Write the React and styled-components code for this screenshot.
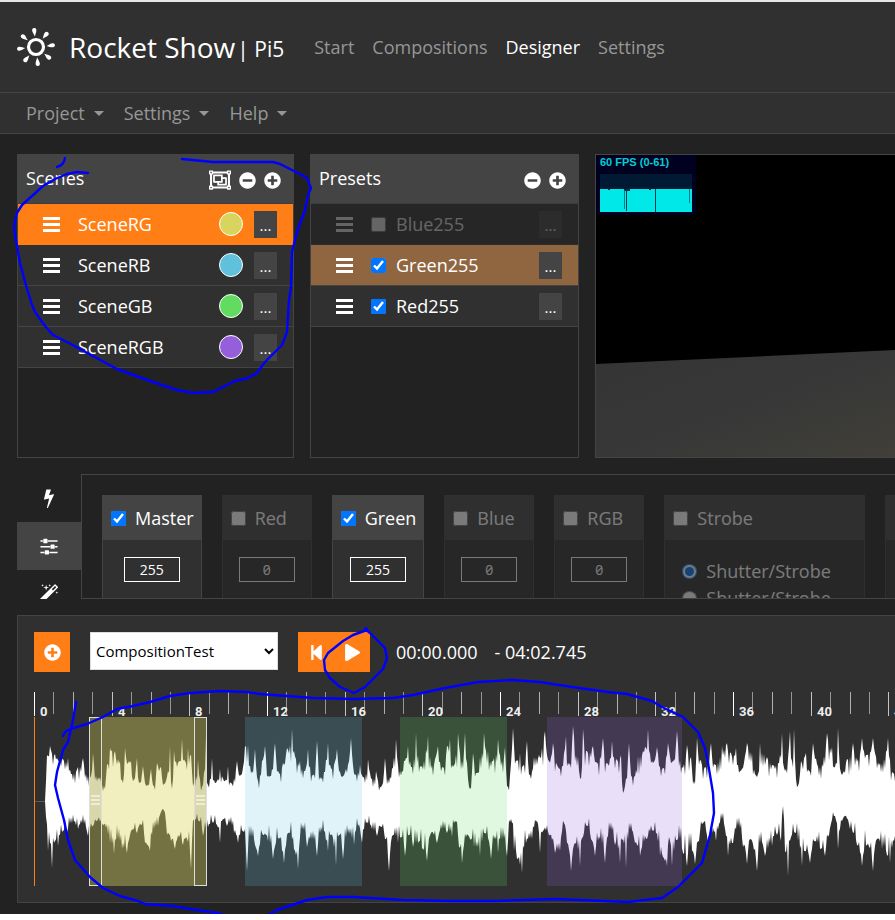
import React from "react";
import styled, { createGlobalStyle, css } from "styled-components";
import {
  FaMinusCircle,
  FaPlay,
  FaPlusCircle,
  FaRegObjectGroup,
  FaStepBackward,
} from "react-icons/fa";

const color = {
  page: "#222222",
  panel: "#303030",
  line: "#444444",
  muted: "#979797",
  accent: "#ff7f16",
  accentSoft: "#906641",
  pen: "#0000ff",
};

const GlobalStyle = createGlobalStyle`
  *, *::before, *::after { box-sizing: border-box; }
  body {
    margin: 0;
    background: #ffffff;
    color: #ffffff;
    font-family: "Open Sans", "Noto Sans", sans-serif;
    font-size: 18px;
    line-height: 24px;
  }
  button, input, select { font: inherit; color: inherit; margin: 0; }
`;

const Page = styled.div`
  position: relative;
  border-top: 2px solid #e4e8ea;
  border-bottom: 6px solid #ffffff;
  background: ${color.page};
  overflow: hidden;
`;

const Header = styled.header`
  display: flex;
  align-items: center;
  height: 91px;
  padding-left: 17px;
  background: ${color.panel};
  border-bottom: 1px solid ${color.line};
  white-space: nowrap;
`;

const Brand = styled.a`
  display: flex;
  align-items: center;
  margin-right: 30px;
  color: #ffffff;
  text-decoration: none;
`;

const BrandName = styled.span`
  margin-left: 14px;
  font-size: 28px;
  line-height: 38px;
`;

const BrandDevice = styled.span`
  margin-left: 2px;
  padding-top: 4px;
  font-size: 21px;
  line-height: 28px;
`;

const Nav = styled.nav`
  display: flex;
  gap: 18px;
`;

const NavLink = styled.a`
  color: ${(p) => (p.$active ? "#ffffff" : color.muted)};
  text-decoration: none;
`;

const MenuBar = styled.nav`
  display: flex;
  align-items: center;
  gap: 20px;
  height: 41px;
  padding-left: 26px;
  background: ${color.panel};
  border-bottom: 1px solid ${color.line};
`;

const MenuButton = styled.button`
  display: flex;
  align-items: center;
  gap: 9px;
  padding: 0;
  border: 0;
  background: none;
  color: ${color.muted};

  &::after {
    content: "";
    border: 5px solid transparent;
    border-top-color: currentColor;
    border-bottom: 0;
  }
`;

const Workspace = styled.main`
  display: flex;
  flex-direction: column;
  gap: 16px;
  padding: 20px 0 11px 17px;
`;

const TopRow = styled.div`
  display: grid;
  grid-template-columns: 277fr 269fr 300fr;
  gap: 16px;
  height: 304px;
`;

const Panel = styled.section`
  min-width: 0;
  border: 1px solid ${color.line};
`;

const PanelHeader = styled.div`
  display: flex;
  align-items: center;
  justify-content: space-between;
  height: 49px;
  padding: 2px 12px 0 8px;
  background: ${color.line};
  border-bottom: 1px solid #3c3c3c;
`;

const PanelTitle = styled.h2`
  margin: 0 0 5px;
  font-size: 18px;
  font-weight: 400;
  line-height: 24px;
`;

const IconGroup = styled.div`
  display: flex;
  align-items: center;
  gap: 8px;
`;

const IconButton = styled.button`
  display: flex;
  padding: 0;
  border: 0;
  background: none;
  font-size: ${(p) => p.$size || 17}px;
`;

const List = styled.ul`
  margin: 0;
  padding: 0;
  list-style: none;
`;

const rowTone = {
  accent: css`
    background: ${color.accent};
    border-color: ${color.accent};
  `,
  soft: css`
    background: ${color.accentSoft};
  `,
};

const Row = styled.li`
  display: flex;
  align-items: center;
  height: 41px;
  padding: 0 16px 0 25px;
  background: ${color.panel};
  border-bottom: 1px solid ${color.line};
  opacity: ${(p) => (p.$dim ? 0.3 : 1)};
  ${(p) => rowTone[p.$tone]}
`;

const Grip = styled.span`
  display: flex;
  flex-direction: column;
  gap: 3px;
  width: 17px;
  margin-right: 18px;

  &::before, &::after, & > i {
    content: "";
    height: 3px;
    background: #ffffff;
  }
`;

const RowLabel = styled.label`
  display: flex;
  align-items: center;
  flex: 1;
  gap: 10px;
`;

const Tick = styled.input`
  width: 15px;
  height: 15px;
  flex: none;
`;

const Swatch = styled.span`
  width: 24px;
  height: 24px;
  margin-right: 11px;
  border: 1px solid #ffffff;
  border-radius: 50%;
  background: ${(p) => p.$fill};
`;

const MoreButton = styled.button`
  width: 23px;
  height: 27px;
  padding: 2px 0 0;
  border: 0;
  background: ${color.line};
  font-size: 15px;
  line-height: 24px;
`;

const Preview = styled.section`
  position: relative;
  min-width: 0;
  border: 1px solid ${color.line};
  border-right: 0;
  background: #000000;
`;

const Stage = styled.svg`
  display: block;
  width: 100%;
  height: 100%;
`;

const Stats = styled.div`
  position: absolute;
  top: 0;
  left: 0;
  width: 100px;
  padding: 0 4px 3px;
  background: #000020;
  color: #00cdd6;
  font: 700 11px/15px "Liberation Sans", Arial, sans-serif;
  white-space: nowrap;

  svg { display: block; margin-top: 4px; }
`;

const ChannelRow = styled.section`
  display: flex;
  height: 125px;
  overflow: hidden;
`;

const Tabs = styled.div`
  width: 64px;
  flex: none;
`;

const Tab = styled.button`
  display: flex;
  align-items: center;
  justify-content: center;
  width: 100%;
  height: 48px;
  padding: 0;
  border: 0;
  background: ${(p) => (p.$active ? color.line : "transparent")};
`;

const Channels = styled.div`
  display: flex;
  flex: 1;
  gap: 20px;
  min-width: 0;
  padding: 20px 0 0 20px;
  border: 1px solid ${color.line};
  border-right: 0;
  overflow: hidden;
`;

const Channel = styled.div`
  flex: none;
  min-width: ${(p) => (p.$wide ? 201 : 90)}px;
  min-height: 160px;
  border: 1px solid ${color.line};
  background: ${color.panel};
  opacity: ${(p) => (p.$dim ? 0.4 : 1)};
`;

const ChannelHeader = styled.label`
  display: flex;
  align-items: center;
  gap: 9px;
  height: 44px;
  padding: 0 7px 0 8px;
  background: ${color.line};
`;

const ChannelBody = styled.div`
  display: flex;
  flex-direction: column;
  align-items: ${(p) => (p.$start ? "flex-start" : "center")};
  gap: 3px;
  padding: ${(p) => (p.$start ? "19px 17px" : "17px 0")};
`;

const ValueInput = styled.input`
  width: 56px;
  height: 25px;
  padding: 0;
  border: 1px solid #ffffff;
  background: transparent;
  font-size: 14px;
  font-variant-numeric: slashed-zero;
  text-align: center;
`;

const RadioLabel = styled.label`
  display: flex;
  align-items: center;
  gap: 9px;
`;

const Timeline = styled.section`
  border: 1px solid ${color.line};
  border-right: 0;
  background: ${color.panel};
  padding: 16px 0 16px 16px;
`;

const Transport = styled.div`
  display: flex;
  align-items: flex-start;
  gap: 20px;
  height: 60px;
`;

const AccentButton = styled.button`
  display: flex;
  align-items: center;
  justify-content: center;
  width: 36px;
  height: 40px;
  padding: 0;
  border: 0;
  background: ${color.accent};
  font-size: 17px;
`;

const ButtonPair = styled.div`
  display: flex;
`;

const Composition = styled.select`
  width: 188px;
  height: 38px;
  padding: 0 1px;
  border: 1px solid #dddddd;
  border-radius: 0;
  background: #ffffff;
  color: #000000;
  font-size: 15px;
`;

const Clock = styled.div`
  display: flex;
  gap: 17px;
  padding: 8px 0 0 6px;
`;

const Track = styled.svg`
  display: block;
  width: 100%;
  height: 194px;
`;

const TrackLabel = styled.text`
  fill: #eeeeee;
  font: 700 13px Roboto, "Open Sans", sans-serif;
`;

const PenMarks = styled.svg`
  position: absolute;
  top: -2px;
  left: 0;
  width: 895px;
  height: 920px;
  pointer-events: none;
  fill: none;
  stroke: ${color.pen};
  stroke-width: 2.4;
  stroke-linecap: round;
  stroke-linejoin: round;
`;

function Glyph({ d }) {
  return (
    <svg width="20" height="20" viewBox="0 0 1792 1792" fill="currentColor" aria-hidden="true">
      <path d={d} />
    </svg>
  );
}

const BOLT =
  "M1333 566q18 20 7 44l-540 1157q-13 25-42 25-4 0-14-2-17-5-25.5-19t-4.5-30l197-808-406 101q-4 1-12 1-18 0-31-11-18-15-13-39l201-825q4-14 16-23t28-9h328q19 0 32 12.5t13 29.5q0 8-5 18l-171 463 396-98q8-2 12-2 19 0 34 15z";
const SLIDERS =
  "M480 1408v128h-352v-128h352zm352-128q26 0 45 19t19 45v256q0 26-19 45t-45 19h-256q-26 0-45-19t-19-45v-256q0-26 19-45t45-19h256zm160-384v128h-864v-128h864zm-640-512v128h-224v-128h224zm1312 1024v128h-736v-128h736zm-960-1152q26 0 45 19t19 45v256q0 26-19 45t-45 19h-256q-26 0-45-19t-19-45v-256q0-26 19-45t45-19h256zm640 512q26 0 45 19t19 45v256q0 26-19 45t-45 19h-256q-26 0-45-19t-19-45v-256q0-26 19-45t45-19h256zm320 128v128h-224v-128h224zm0-512v128h-864v-128h864z";
const WAND =
  "M1254 581l293-293-107-107-293 293zm447-293q0 27-18 45l-1286 1286q-18 18-45 18t-45-18l-198-198q-18-18-18-45t18-45l1286-1286q18-18 45-18t45 18l198 198q18 18 18 45zm-1351-190l98 30-98 30-30 98-30-98-98-30 98-30 30-98zm350 162l196 60-196 60-60 196-60-196-196-60 196-60 60-196zm930 478l98 30-98 30-30 98-30-98-98-30 98-30 30-98zm-640-640l98 30-98 30-30 98-30-98-98-30 98-30 30-98z";

function SunLogo() {
  return (
    <svg width="38" height="40" viewBox="-19 -20 38 40" aria-hidden="true">
      <circle r="7.5" fill="none" stroke="#fff" strokeWidth="3.2" />
      {[0, 1, 2, 3, 4, 5, 6, 7].map((i) => (
        <path
          key={i}
          d="M0 -10.6C-.8 -13 -2.1 -14.8 -2.1 -16.8C-2.1 -18.3 -1.2 -19 0 -19S2.1 -18.3 2.1 -16.8C2.1 -14.8 .8 -13 0 -10.6Z"
          fill="#fff"
          transform={`rotate(${i * 45 - 6})`}
        />
      ))}
    </svg>
  );
}

/* Amplitude control points as x, height pairs, measured from the centre line. */
const UPPER = [
  45, 0, 46, 20, 47, 46, 50, 55, 55, 47, 63, 42, 68, 43, 72, 27, 78, 34, 83, 43, 88, 25, 91, 25, 93, 48, 96, 25, 100, 24, 104, 15,
  107, 36, 110, 53, 115, 50, 118, 42, 120, 40, 123, 18, 125, 53, 129, 40, 131, 40, 133, 20, 137, 43, 139, 18, 143, 35, 147, 15,
  151, 32, 154, 15, 157, 38, 161, 34, 164, 17, 168, 30, 170, 55, 172, 12, 174, 50, 179, 40, 182, 62, 185, 40, 188, 53, 191, 46,
  194, 18, 198, 42, 202, 14, 206, 65, 208, 16, 212, 43, 215, 18, 220, 32, 225, 20, 228, 35, 231, 18, 237, 40, 241, 26, 245, 55,
  248, 56, 252, 30, 255, 52, 258, 20, 262, 40, 265, 55, 269, 24, 275, 58, 279, 28, 283, 38, 287, 53, 292, 72, 296, 42, 300, 40,
  305, 30, 308, 52, 313, 26, 317, 60, 321, 22, 328, 58, 332, 32, 337, 52, 342, 24, 346, 32, 351, 63, 355, 26, 360, 36, 364, 24,
  368, 42, 372, 22, 376, 30, 381, 14, 385, 43, 388, 22, 396, 62, 400, 30, 404, 40, 408, 55, 412, 34, 416, 68, 421, 34, 428, 65,
  432, 36, 438, 55, 443, 34, 447, 55, 450, 62, 453, 34, 458, 68, 462, 40, 465, 68, 467, 38, 470, 12, 473, 48, 477, 28, 480, 44,
  484, 68, 488, 50, 492, 40, 498, 62, 502, 40, 505, 54, 508, 14, 513, 73, 517, 40, 520, 48, 523, 35, 527, 60, 530, 26, 534, 44,
  539, 46, 545, 70, 549, 40, 553, 58, 560, 32, 566, 65, 569, 36, 573, 75, 578, 44, 581, 22, 583, 72, 587, 50, 593, 55, 597, 38,
  603, 63, 607, 38, 612, 60, 616, 42, 621, 46, 623, 8, 629, 58, 632, 24, 638, 45, 643, 50, 648, 72, 653, 38, 657, 54, 662, 32,
  668, 58, 673, 40, 677, 70, 682, 34, 687, 56, 691, 44, 694, 20, 697, 63, 701, 40, 705, 34, 711, 58, 715, 36, 722, 55, 727, 58,
  731, 48, 736, 53, 740, 30, 747, 58, 752, 48, 757, 24, 760, 58, 767, 44, 773, 36, 778, 38, 782, 68, 785, 30, 790, 70, 792, 40,
  794, 72, 797, 14, 801, 40, 806, 48, 809, 30, 813, 58, 820, 34, 827, 68, 832, 54, 835, 34, 838, 73, 841, 28, 847, 42, 853, 58,
  858, 42, 862, 63, 867, 46, 873, 63, 880, 38, 888, 63, 893, 28, 900, 60,
];
const LOWER = [
  45, 0, 46, 16, 48, 50, 50, 42, 52, 67, 55, 40, 58, 45, 63, 30, 67, 32, 72, 22, 78, 28, 82, 22, 88, 35, 93, 25, 97, 20, 103, 24,
  110, 42, 114, 53, 118, 38, 122, 48, 127, 52, 133, 28, 137, 32, 141, 24, 145, 42, 150, 50, 154, 28, 158, 25, 163, 8, 167, 34,
  171, 40, 175, 48, 179, 36, 183, 44, 187, 38, 191, 68, 194, 20, 199, 20, 203, 35, 208, 26, 213, 22, 217, 24, 220, 42, 223, 18,
  227, 25, 230, 22, 234, 32, 238, 42, 243, 30, 247, 70, 250, 36, 258, 55, 263, 34, 268, 40, 273, 58, 278, 38, 284, 62, 289, 32,
  294, 48, 298, 68, 302, 28, 307, 46, 312, 38, 317, 55, 322, 30, 328, 50, 331, 34, 336, 65, 339, 34, 343, 58, 348, 32, 354, 44,
  358, 25, 362, 42, 366, 22, 372, 28, 377, 35, 381, 26, 385, 38, 389, 70, 393, 34, 398, 42, 401, 36, 405, 55, 409, 34, 413, 46,
  418, 42, 422, 48, 427, 60, 431, 32, 437, 42, 442, 28, 447, 32, 452, 36, 455, 20, 459, 46, 462, 62, 466, 36, 470, 38, 474, 46,
  480, 55, 485, 32, 491, 58, 494, 38, 498, 52, 502, 38, 507, 55, 511, 18, 514, 50, 517, 58, 522, 72, 526, 42, 532, 38, 537, 20,
  540, 52, 543, 30, 549, 34, 555, 52, 560, 50, 564, 22, 567, 42, 571, 70, 575, 42, 580, 65, 583, 36, 587, 25, 591, 38, 595, 55,
  600, 38, 605, 62, 610, 28, 615, 44, 620, 62, 623, 38, 626, 67, 630, 28, 635, 42, 640, 55, 647, 38, 653, 30, 660, 55, 667, 65,
  669, 36, 672, 65, 678, 38, 683, 52, 687, 65, 690, 46, 695, 63, 699, 40, 703, 22, 708, 44, 712, 32, 716, 40, 722, 18, 728, 55,
  733, 42, 738, 25, 743, 46, 747, 63, 750, 38, 757, 70, 760, 42, 765, 55, 772, 45, 777, 34, 781, 40, 783, 5, 785, 50, 788, 75,
  791, 36, 795, 32, 802, 65, 806, 50, 810, 62, 815, 40, 820, 48, 825, 55, 829, 34, 835, 15, 838, 48, 842, 20, 845, 15, 850, 28,
  853, 32, 857, 44, 862, 65, 867, 44, 873, 70, 877, 38, 882, 48, 890, 62, 896, 40, 900, 60,
];

const ORIGIN = 34;
const CENTER = 109;
const SECOND = 233 / 12;

function edge(points, sign) {
  const out = [];
  let seed = sign > 0 ? 7 : 23;
  let k = 0;
  for (let x = 45; x < 900; x += 1) {
    while (k < points.length - 4 && points[k + 2] <= x) k += 2;
    const [x0, h0, x1, h1] = points.slice(k, k + 4);
    const t = Math.min(1, (x - x0) / (x1 - x0));
    seed = (seed * 16807) % 2147483647;
    const rand = seed / 2147483647;
    const low = Math.min(h0, h1);
    const ramp = low + (Math.max(h0, h1) - low) * Math.pow(h1 > h0 ? t : 1 - t, 1.7);
    const cut = x === x0 ? 0 : rand * (x % 2 ? 0.42 : 0.1);
    out.push(`${x - ORIGIN} ${(CENTER + sign * ramp * (1 - cut)).toFixed(1)}`);
  }
  return out;
}

const WAVE = `M${edge(UPPER, -1).join("L")}L${edge(LOWER, 1).reverse().join("L")}Z`;

const REGIONS = [
  { x: 55, w: 118, fill: "#ddd860", opacity: 0.4 },
  { x: 211, w: 117, fill: "#5fc1dc", opacity: 0.2 },
  { x: 366, w: 107, fill: "#61dc61", opacity: 0.2 },
  { x: 513, w: 135, fill: "#905fdc", opacity: 0.2 },
];

function Handle({ x }) {
  return (
    <g transform={`translate(${x} 25)`}>
      <rect x=".5" y=".5" width="12" height="168" fill="rgba(0,0,0,.1)" stroke="#dedede" />
      <path d="M2 79H11M2 83H11M2 87H11" stroke="#f4f3dc" strokeWidth="2" opacity=".85" />
    </g>
  );
}

function TimelineTrack() {
  const ticks = Array.from({ length: 45 }, (_, i) => i);
  return (
    <Track role="img" aria-label="Waveform">
      {ticks.map((i) => (
        <rect
          key={i}
          x={Math.round(i * SECOND)}
          width="1"
          height={i % 4 ? 22 : 24}
          fill={i % 12 === 0 ? "#ffffff" : i % 4 === 0 ? "#c4c4c4" : i % 2 ? "#969696" : "#b0b0b0"}
        />
      ))}
      {ticks.filter((i) => i % 4 === 0).map((i) => (
        <TrackLabel key={i} x={Math.round(i * SECOND) + 6} y="24">{i}</TrackLabel>
      ))}
      <path d={`M0 ${CENTER + 0.5}H12`} stroke="#5a5a5a" />
      <path d={WAVE} fill="#ffffff" />
      {REGIONS.map((r) => (
        <rect key={r.x} x={r.x} y="25" width={r.w} height="169" fill={r.fill} fillOpacity={r.opacity} />
      ))}
      <Handle x={55} />
      <Handle x={160} />
      <rect y="25" width="1" height="169" fill={color.accent} />
    </Track>
  );
}

const SCENES = [
  { name: "SceneRG", fill: "#d9d45d", tone: "accent" },
  { name: "SceneRB", fill: "#5fc1dc" },
  { name: "SceneGB", fill: "#61dc61" },
  { name: "SceneRGB", fill: "#955fdc" },
];

const PRESETS = [
  { name: "Blue255", on: false },
  { name: "Green255", on: true, tone: "soft" },
  { name: "Red255", on: true },
];

const CHANNELS = [
  { name: "Master", value: 255, on: true },
  { name: "Red", value: 0 },
  { name: "Green", value: 255, on: true },
  { name: "Blue", value: 0 },
  { name: "RGB", value: 0 },
];

export default function App() {
  return (
    <>
      <GlobalStyle />
      <Page>
        <Header>
          <Brand href="#">
            <SunLogo />
            <BrandName>Rocket Show</BrandName>
            <BrandDevice>| Pi5</BrandDevice>
          </Brand>
          <Nav>
            <NavLink href="#start">Start</NavLink>
            <NavLink href="#compositions">Compositions</NavLink>
            <NavLink href="#designer" $active>Designer</NavLink>
            <NavLink href="#settings">Settings</NavLink>
          </Nav>
        </Header>
        <MenuBar>
          <MenuButton>Project</MenuButton>
          <MenuButton>Settings</MenuButton>
          <MenuButton>Help</MenuButton>
        </MenuBar>

        <Workspace>
          <TopRow>
            <Panel>
              <PanelHeader>
                <PanelTitle>Scenes</PanelTitle>
                <IconGroup>
                  <IconButton $size={22} aria-label="Group scenes"><FaRegObjectGroup /></IconButton>
                  <IconButton aria-label="Remove scene"><FaMinusCircle /></IconButton>
                  <IconButton aria-label="Add scene"><FaPlusCircle /></IconButton>
                </IconGroup>
              </PanelHeader>
              <List>
                {SCENES.map((s) => (
                  <Row key={s.name} $tone={s.tone}>
                    <Grip><i /></Grip>
                    <RowLabel as="span">{s.name}</RowLabel>
                    <Swatch $fill={s.fill} />
                    <MoreButton aria-label={`${s.name} options`}>...</MoreButton>
                  </Row>
                ))}
              </List>
            </Panel>

            <Panel>
              <PanelHeader>
                <PanelTitle>Presets</PanelTitle>
                <IconGroup>
                  <IconButton aria-label="Remove preset"><FaMinusCircle /></IconButton>
                  <IconButton aria-label="Add preset"><FaPlusCircle /></IconButton>
                </IconGroup>
              </PanelHeader>
              <List>
                {PRESETS.map((p) => (
                  <Row key={p.name} $tone={p.tone} $dim={!p.on}>
                    <Grip><i /></Grip>
                    <RowLabel>
                      <Tick type="checkbox" defaultChecked={p.on} />
                      {p.name}
                    </RowLabel>
                    <MoreButton aria-label={`${p.name} options`}>...</MoreButton>
                  </Row>
                ))}
              </List>
            </Panel>

            <Preview>
              <Stage viewBox="0 0 299 302" preserveAspectRatio="none" aria-hidden="true">
                <defs>
                  <linearGradient id="floor" x1="0" y1="0" x2="1" y2="1">
                    <stop offset="0" stopColor="#343434" />
                    <stop offset=".55" stopColor="#383838" />
                    <stop offset="1" stopColor="#403f38" />
                  </linearGradient>
                </defs>
                <path d="M0 209L299 195V302H0Z" fill="url(#floor)" />
              </Stage>
              <Stats>
                60 FPS (0-61)
                <svg width="92" height="38" aria-hidden="true">
                  <path d="M0 0H92V38H0Z" fill="#001a33" />
                  <path d="M0 15H92V38H0Z" fill="#00e8e8" />
                  <path d="M24 15H30V17H24ZM8 15H10V16H8ZM49 15H51V16H49Z" fill="#002a40" />
                  <path d="M26.5 16V37M55.5 15V38" stroke="#003d4d" />
                  <path d="M24.5 16V35M89.5 15V29" stroke="#007a88" />
                </svg>
              </Stats>
            </Preview>
          </TopRow>

          <ChannelRow>
            <Tabs>
              <Tab aria-label="Capabilities"><Glyph d={BOLT} /></Tab>
              <Tab aria-label="Channels" $active><Glyph d={SLIDERS} /></Tab>
              <Tab aria-label="Effects"><Glyph d={WAND} /></Tab>
            </Tabs>
            <Channels>
              {CHANNELS.map((c) => (
                <Channel key={c.name} $dim={!c.on}>
                  <ChannelHeader>
                    <Tick type="checkbox" defaultChecked={c.on} />
                    {c.name}
                  </ChannelHeader>
                  <ChannelBody>
                    <ValueInput aria-label={`${c.name} value`} defaultValue={c.value} />
                  </ChannelBody>
                </Channel>
              ))}
              <Channel $dim $wide>
                <ChannelHeader>
                  <Tick type="checkbox" />
                  Strobe
                </ChannelHeader>
                <ChannelBody $start>
                  <RadioLabel>
                    <Tick type="radio" name="strobe" defaultChecked />
                    Shutter/Strobe
                  </RadioLabel>
                  <RadioLabel>
                    <Tick type="radio" name="strobe" />
                    Shutter/Strobe
                  </RadioLabel>
                </ChannelBody>
              </Channel>
              <Channel $dim>
                <ChannelHeader as="div" />
              </Channel>
            </Channels>
          </ChannelRow>

          <Timeline>
            <Transport>
              <AccentButton aria-label="Add region"><FaPlusCircle /></AccentButton>
              <Composition aria-label="Composition" defaultValue="CompositionTest">
                <option>CompositionTest</option>
              </Composition>
              <ButtonPair>
                <AccentButton aria-label="Back to start"><FaStepBackward /></AccentButton>
                <AccentButton aria-label="Play"><FaPlay /></AccentButton>
              </ButtonPair>
              <Clock>
                <span>00:00.000</span>
                <span>- 04:02.745</span>
              </Clock>
            </Transport>
            <TimelineTrack />
          </Timeline>
        </Workspace>

        <PenMarks viewBox="0 0 895 920" aria-hidden="true">
          <path d="M65 158Q64 165 57 167" />
          <path d="M88 173L77 172L67 174L55 179L43 186L32 196L22 205L17 213L14 225L15 235L18 252L20 263L25 282L32 305L35 312L45 326L53 335L67 342L117 369L150 381L177 390L193 393L213 392L235 381L248 378L257 373L265 362L282 345L287 332L289 300L291 288L292 252L297 232L305 210L308 195L311 188L307 178L300 174L290 169L280 164L273 162L213 162L182 159" />
          <path d="M366 628L367 630L353 635L343 641L328 653L324 660L325 670L330 678L340 687L354 693L365 687L383 669L387 658L385 648L370 633L365 629" />
          <path d="M76 702L73 720L68 742L63 750L57 772L55 785L58 798L64 820L68 840L75 860L90 877L103 888L120 896L138 901L145 904L173 906L197 910L217 913L230 917L250 919L265 917L277 910L307 900L327 897L353 897L403 900L450 901L495 901L555 899L628 902L662 898L678 887L702 863L710 835L714 813L713 793L708 763L705 748L698 732L683 717L662 707L652 701L627 694L608 692L572 687L540 682L512 680L478 682L445 688L413 695L393 698L353 699L313 698L260 694L247 692L220 691L190 693L170 696L150 702L133 706L117 709L103 717L87 724L70 729L65 732L63 736" />
        </PenMarks>
      </Page>
    </>
  );
}
